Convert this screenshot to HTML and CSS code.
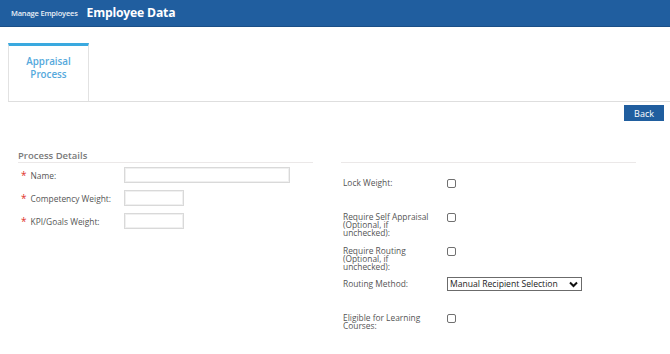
FILE: index.html
```html
<!DOCTYPE html>
<html>
<head>
<meta charset="utf-8">
<link rel="stylesheet" href="styles.css">
</head>
<body>
<header class="topbar">
  <span class="crumb">Manage Employees</span>
  <span class="title">Employee Data</span>
</header>
<nav class="tabs">
  <div class="tab active"><span class="tab-line">Appraisal</span><span class="tab-line">Process</span></div>
</nav>
<div class="toolbar">
  <button class="btn">Back</button>
</div>
<section class="form">
  <div class="col">
    <div class="col-head">Process Details</div>
    <div class="frow first">
      <label class="lbl"><span class="req">*</span>Name:</label>
      <input class="txt wide" type="text">
    </div>
    <div class="frow">
      <label class="lbl"><span class="req">*</span>Competency Weight:</label>
      <input class="txt short" type="text">
    </div>
    <div class="frow">
      <label class="lbl"><span class="req">*</span>KPI/Goals Weight:</label>
      <input class="txt short" type="text">
    </div>
  </div>
  <div class="col">
    <div class="col-head"></div>
    <div class="crow r-lock">
      <label class="clbl">Lock Weight:</label>
      <input class="chk" type="checkbox">
    </div>
    <div class="crow r-self">
      <label class="clbl">Require Self Appraisal (Optional, if unchecked):</label>
      <input class="chk" type="checkbox">
    </div>
    <div class="crow r-route">
      <label class="clbl">Require Routing (Optional, if unchecked):</label>
      <input class="chk" type="checkbox">
    </div>
    <div class="crow r-method">
      <label class="clbl">Routing Method:</label>
      <div class="sel-wrap">
        <select class="sel"><option>Manual Recipient Selection</option></select>
        <svg class="chev" width="9" height="7" viewBox="0 0 9 7"><path d="M1 1.5 L4.5 5 L8 1.5" fill="none" stroke="#111" stroke-width="2"/></svg>
      </div>
    </div>
    <div class="crow r-learn">
      <label class="clbl">Eligible for Learning Courses:</label>
      <input class="chk" type="checkbox">
    </div>
  </div>
</section>
</body>
</html>
```
FILE: styles.css
```css
* { box-sizing: border-box; }
body {
  margin: 0;
  font-family: "Open Sans", "DejaVu Sans", sans-serif;
  background: #fff;
  color: #555;
}
.topbar {
  height: 27px;
  background: #205e9f;
  border-bottom: 1px solid #1b4f87;
  display: flex;
  align-items: center;
  padding-left: 11px;
  gap: 9px;
}
.crumb {
  color: #e8eef6;
  font-size: 7.5px;
  font-weight: 600;
  letter-spacing: -0.2px;
}
.title {
  color: #fff;
  font-size: 12.2px;
  font-weight: 700;
  letter-spacing: -0.2px;
  position: relative;
  top: -1px;
}
.tabs {
  margin: 16px 0 0 8px;
  border-bottom: 1px solid #dedede;
  display: flex;
}
.tab {
  width: 81px;
  height: 58px;
  border: 1px solid #e2e2e2;
  border-bottom: none;
  border-top: 3px solid #3aa9df;
  display: flex;
  flex-direction: column;
  align-items: center;
  padding-top: 9px;
  text-align: center;
  font-size: 9.8px;
  line-height: 13px;
  font-weight: 600;
  color: #55a9dc;
}
.tab-line { display: block; }
.toolbar {
  display: flex;
  justify-content: flex-end;
  padding: 3px 6px 0 0;
}
.btn {
  width: 40px;
  height: 16px;
  background: #205e9f;
  border: none;
  color: #fff;
  font-family: "Open Sans", sans-serif;
  font-size: 9px;
  padding: 0;
}
.form {
  display: flex;
  gap: 28px;
  padding: 29px 0 0 18px;
}
.col { width: 295px; }
.col-head {
  height: 13px;
  border-bottom: 1px solid #ebe8e8;
  font-size: 9.5px;
  line-height: 12px;
  font-weight: 600;
  color: #7a7a7a;
}
.frow {
  display: flex;
  align-items: center;
  margin-top: 7px;
  height: 16px;
}
.frow.first { margin-top: 4px; }
.lbl {
  width: 106px;
  font-size: 8.4px;
  color: #555;
  padding-left: 3px;
}
.req {
  color: #e0312b;
  font-size: 10px;
  margin-right: 4px;
}
.txt {
  height: 16px;
  border: 1px solid #d9d9d9;
  box-shadow: inset 0 0 0 1px #f0f0f0;
  padding: 0;
}
.wide { width: 166px; }
.short { width: 60px; }
.crow {
  display: flex;
  align-items: flex-start;
}
.clbl {
  width: 88px;
  margin-right: 18px;
  padding-left: 2px;
  font-size: 8.4px;
  line-height: 8px;
  color: #555;
}
.r-lock { margin-top: 16px; }
.r-self { margin-top: 25px; }
.r-route { margin-top: 10px; }
.r-method { margin-top: 6px; align-items: center; }
.r-learn { margin-top: 23px; }
.chk {
  appearance: none;
  -webkit-appearance: none;
  width: 9px;
  height: 9px;
  margin: 0;
  border: 1px solid #707070;
  border-radius: 2px;
  background: #fff;
}
.sel-wrap {
  position: relative;
  width: 135px;
  height: 14px;
}
.sel {
  display: block;
  appearance: none;
  -webkit-appearance: none;
  width: 135px;
  height: 14px;
  border: 1px solid #6b6b6b;
  border-radius: 0;
  background: #fff;
  font-family: "Open Sans", sans-serif;
  font-size: 8.6px;
  color: #222;
  padding: 0 0 0 2px;
  line-height: 12px;
}
.chev {
  position: absolute;
  right: 4px;
  top: 4px;
}
```
